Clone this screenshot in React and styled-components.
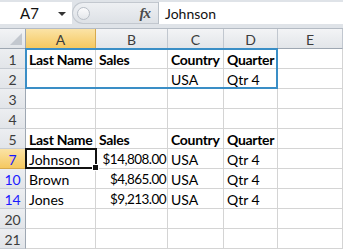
import React from 'react';
import styled, { createGlobalStyle, css } from 'styled-components';

const Global = createGlobalStyle`
  html, body { margin: 0; padding: 0; background: #fff; overflow: hidden; }
  body { font-family: Lato, "Open Sans", sans-serif; }
`;

const Bar = styled.div`
  height: 29px;
  box-sizing: border-box;
  padding: 2px 0 4px;
  display: flex;
  background: #dfe3e8;
  border-bottom: 1px solid #b4bbc4;
`;

const NameBox = styled.div`
  width: 72px;
  display: flex;
  align-items: center;
  justify-content: space-between;
  box-sizing: border-box;
  padding: 0 6px 0 20px;
  background: #fff;
  font-size: 15px;
  color: #111;
`;

const Caret = styled.span`
  width: 0;
  height: 0;
  border-left: 4px solid transparent;
  border-right: 4px solid transparent;
  border-top: 4px solid #333;
  margin-top: 2px;
`;

const Splitter = styled.div`
  width: 86px;
  display: flex;
  align-items: center;
  justify-content: space-between;
  box-sizing: border-box;
  padding: 0 8px 0 4px;
  background: linear-gradient(#eef0f3, #dde1e6);
  border: 1px solid #c3c8cf;
  border-right: none;
  border-radius: 11px 0 0 11px;
`;

const Handle = styled.span`
  width: 11px;
  height: 11px;
  border-radius: 50%;
  border: 1px solid #b8bec6;
  background: linear-gradient(#fbfbfc, #e4e7eb);
`;

const Fx = styled.span`
  font-family: "Liberation Serif", serif;
  font-style: italic;
  font-weight: 700;
  font-size: 15px;
  color: #4a4a4a;
  letter-spacing: -1px;
`;

const FormulaInput = styled.div`
  flex: 1;
  display: flex;
  align-items: center;
  padding-left: 6px;
  background: #fff;
  border-left: 1px solid #b9c0c8;
  font-size: 14px;
  color: #111;
`;

const Sheet = styled.div`
  position: relative;
  display: grid;
  grid-template-columns: 26px 70px 72px 56px 54px 1fr;
  grid-auto-rows: 20px;
`;

const headBase = css`
  box-sizing: border-box;
  display: flex;
  align-items: center;
  justify-content: center;
  font-size: 14px;
  color: #3c3c3c;
`;

const Corner = styled.div`
  ${headBase};
  position: relative;
  background: linear-gradient(#f3f4f6, #e2e5e9);
  border-right: 1px solid #9ea7b2;
  border-bottom: 1px solid #9ea7b2;
  &::after {
    content: '';
    position: absolute;
    right: 3px;
    bottom: 3px;
    border-left: 12px solid transparent;
    border-bottom: 12px solid #c3c8cf;
  }
`;

const ColHead = styled.div`
  ${headBase};
  background: ${p => p.$active
    ? 'linear-gradient(#fbe3a6, #f5c860)'
    : 'linear-gradient(#f3f4f6, #e2e5e9)'};
  border-right: 1px solid ${p => p.$active ? '#d7a94d' : '#c1c7cf'};
  border-bottom: 1px solid ${p => p.$active ? '#e2a530' : '#9ea7b2'};
  padding-top: 1px;
`;

const RowHead = styled.div`
  ${headBase};
  background: ${p => p.$active
    ? 'linear-gradient(#fbe3a6, #f5c860)'
    : 'linear-gradient(#eceef1, #e2e5e9)'};
  border-right: 1px solid ${p => p.$active ? '#e2a530' : '#9ea7b2'};
  border-bottom: 1px solid ${p => p.$active ? '#d7a94d' : '#c6cbd2'};
  color: ${p => p.$filtered ? '#1a1aff' : '#3c3c3c'};
  padding-top: 1px;
`;

const Cell = styled.div`
  box-sizing: border-box;
  display: flex;
  align-items: center;
  justify-content: ${p => p.$right ? 'flex-end' : 'flex-start'};
  padding: 1px ${p => p.$right ? '1px' : '2px'} 0 ${p => p.$right ? '0' : '3px'};
  border-right: 1px solid #d4d4d4;
  border-bottom: 1px solid #d4d4d4;
  font-size: ${p => p.$right ? '13.5px' : '14px'};
  letter-spacing: ${p => p.$right ? '-0.55px' : p.$bold ? '-0.3px' : '0'};
  font-weight: ${p => p.$bold ? 700 : 400};
  color: #000;
  white-space: nowrap;
  overflow: hidden;
`;

const RangeBox = styled.div`
  position: absolute;
  left: 25px;
  top: 19px;
  width: 253px;
  height: 41px;
  box-sizing: border-box;
  border: 2px solid #3a8ec6;
  pointer-events: none;
`;

const ActiveBox = styled.div`
  position: absolute;
  left: 25px;
  top: 119px;
  width: 72px;
  height: 21px;
  box-sizing: border-box;
  border: 2px solid #111;
  pointer-events: none;
`;

const FillHandle = styled.span`
  position: absolute;
  right: -4px;
  bottom: -4px;
  width: 5px;
  height: 5px;
  background: #111;
  border: 1px solid #fff;
`;

const cols = ['A', 'B', 'C', 'D', 'E'];

const rows = [
  { n: 1, bold: true, cells: ['Last Name', 'Sales', 'Country', 'Quarter', ''] },
  { n: 2, cells: ['', '', 'USA', 'Qtr 4', ''] },
  { n: 3, cells: ['', '', '', '', ''] },
  { n: 4, cells: ['', '', '', '', ''] },
  { n: 5, bold: true, cells: ['Last Name', 'Sales', 'Country', 'Quarter', ''] },
  { n: 7, filtered: true, active: true, cells: ['Johnson', '$14,808.00', 'USA', 'Qtr 4', ''] },
  { n: 10, filtered: true, cells: ['Brown', '$4,865.00', 'USA', 'Qtr 4', ''] },
  { n: 14, filtered: true, cells: ['Jones', '$9,213.00', 'USA', 'Qtr 4', ''] },
  { n: 20, cells: ['', '', '', '', ''] },
  { n: 21, cells: ['', '', '', '', ''] },
];

const isNumber = v => v.startsWith('$');

export default function App() {
  return (
    <>
      <Global />
      <Bar>
        <NameBox>A7<Caret /></NameBox>
        <Splitter>
          <Handle />
          <Fx>fx</Fx>
        </Splitter>
        <FormulaInput>Johnson</FormulaInput>
      </Bar>
      <Sheet>
        <Corner />
        {cols.map(c => <ColHead key={c} $active={c === 'A'}>{c}</ColHead>)}
        {rows.map(r => (
          <React.Fragment key={r.n}>
            <RowHead $active={r.active} $filtered={r.filtered}>{r.n}</RowHead>
            {r.cells.map((v, i) => (
              <Cell key={i} $bold={r.bold} $right={isNumber(v)}>{v}</Cell>
            ))}
          </React.Fragment>
        ))}
        <RangeBox />
        <ActiveBox><FillHandle /></ActiveBox>
      </Sheet>
    </>
  );
}
